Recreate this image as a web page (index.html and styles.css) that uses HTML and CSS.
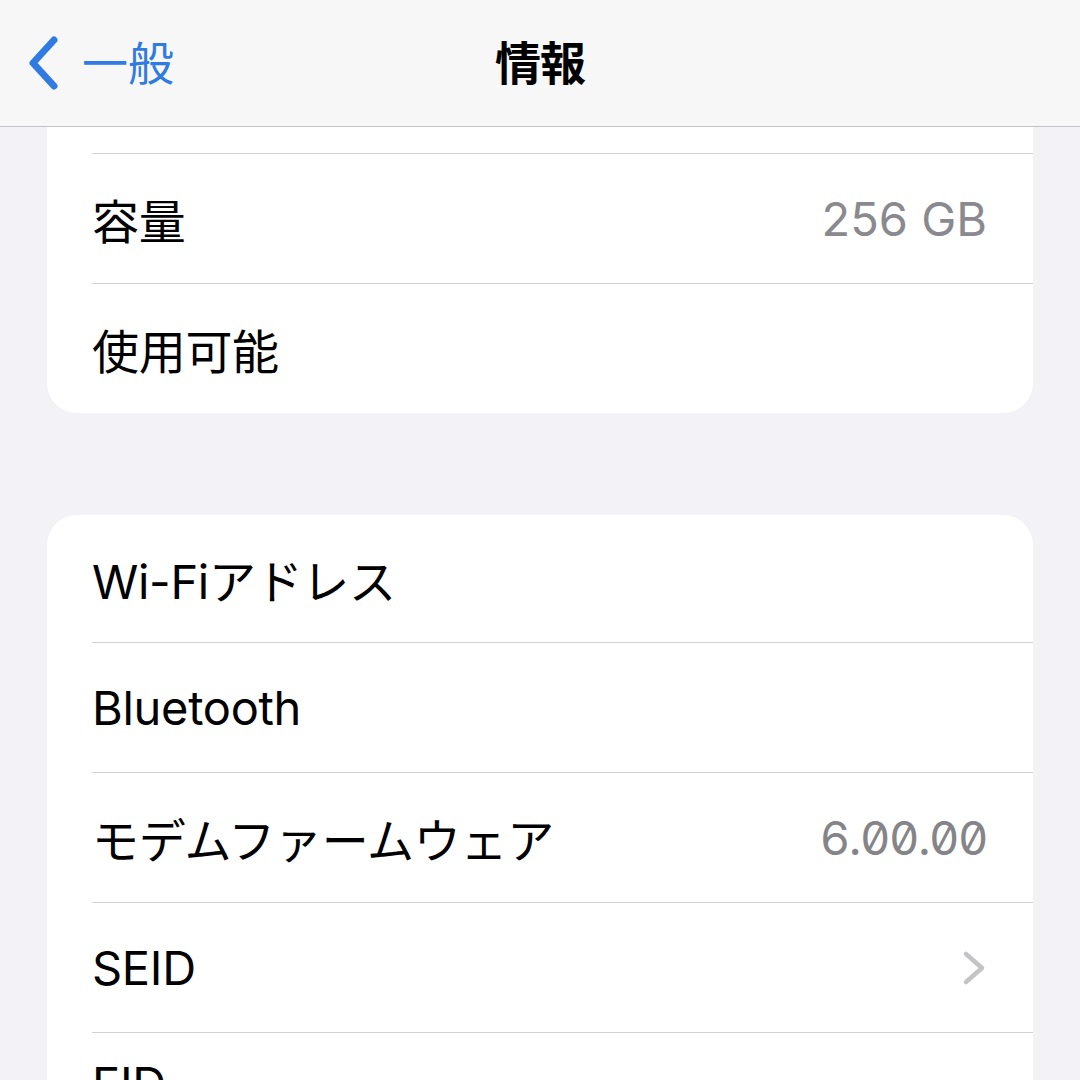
FILE: index.html
```html
<!DOCTYPE html>
<html lang="ja">

<head>
   <meta charset="UTF-8">
   <meta name="viewport" content="width=device-width, initial-scale=1.0">
   <title>情報</title>
   <link rel="stylesheet" href="styles.css">
</head>

<body>
   <div class="screen">
      <header class="navbar">
         <a class="back" href="#">
            <svg class="back-icon" width="34" height="56" viewBox="0 0 34 56">
               <path d="M28 5 L7 28 L28 51" fill="none" stroke="currentColor" stroke-width="7" stroke-linecap="round" stroke-linejoin="round" />
            </svg>
            <span>一般</span>
         </a>
         <h1 class="title">情報</h1>
         <div></div>
      </header>

      <main class="content">
         <section class="card">
            <div class="row stub">
               <div class="row-inner"></div>
            </div>
            <div class="row">
               <div class="row-inner">
                  <span class="label">容量</span>
                  <span class="value">256 GB</span>
               </div>
            </div>
            <div class="row">
               <div class="row-inner">
                  <span class="label">使用可能</span>
                  <span class="value"></span>
               </div>
            </div>
         </section>

         <section class="card">
            <div class="row first">
               <div class="row-inner">
                  <span class="label">Wi-Fiアドレス</span>
                  <span class="value"></span>
               </div>
            </div>
            <div class="row">
               <div class="row-inner">
                  <span class="label">Bluetooth</span>
                  <span class="value"></span>
               </div>
            </div>
            <div class="row">
               <div class="row-inner">
                  <span class="label">モデムファームウェア</span>
                  <span class="value mono">6.00.00</span>
               </div>
            </div>
            <div class="row">
               <div class="row-inner">
                  <span class="label">SEID</span>
                  <svg class="chevron" width="26" height="36" viewBox="0 0 26 36">
                     <path d="M5 4 L21 18 L5 32" fill="none" stroke="currentColor" stroke-width="4.5" stroke-linecap="round" stroke-linejoin="round" />
                  </svg>
               </div>
            </div>
            <div class="row tall">
               <div class="row-inner">
                  <span class="label">EID</span>
               </div>
            </div>
         </section>
      </main>
   </div>
</body>

</html>
```

FILE: styles.css
```css
body {
   margin: 0;
   padding: 0;
   background-color: #f2f2f7;
   font-family: 'Inter', 'Noto Sans CJK JP', sans-serif;
   color: #000;
}

.screen {
   width: 1080px;
   height: 1080px;
   overflow: hidden;
   display: flex;
   flex-direction: column;
}

.navbar {
   flex: none;
   height: 127px;
   box-sizing: border-box;
   padding-bottom: 6px;
   display: grid;
   grid-template-columns: 1fr auto 1fr;
   align-items: center;
   background-color: #f7f7f7;
   border-bottom: 1px solid #c4c4c4;
}

.back {
   display: flex;
   align-items: center;
   gap: 22px;
   padding-left: 26px;
   color: #2f7be3;
   text-decoration: none;
   font-size: 46px;
   font-family: 'Noto Sans CJK JP', sans-serif;
   font-weight: 400;
}

.back-icon {
   margin-top: 6px;
}

.title {
   margin: 0;
   font-size: 46px;
   font-weight: 700;
   font-family: 'Noto Sans CJK JP', sans-serif;
   letter-spacing: -1px;
}

.content {
   flex: 1;
   display: flex;
   flex-direction: column;
   gap: 102px;
   padding: 0 47px;
}

.card {
   background-color: #fff;
   border-radius: 30px;
   overflow: hidden;
}

.card:first-child {
   border-top-left-radius: 0;
   border-top-right-radius: 0;
}

.row {
   padding-left: 45px;
}

.row-inner {
   height: 129px;
   display: flex;
   justify-content: space-between;
   align-items: center;
   padding-right: 46px;
   border-bottom: 1px solid #d1d1d4;
}

.row:last-child .row-inner {
   border-bottom: none;
}

.stub .row-inner {
   height: 26px;
}

.first .row-inner {
   height: 127px;
}

.tall .row-inner {
   height: 160px;
   align-items: flex-start;
   padding-top: 22px;
   box-sizing: border-box;
}

.label {
   font-size: 47px;
   letter-spacing: -0.3px;
}

.value {
   font-size: 47px;
   color: #8a8a8e;
}

.mono {
   font-feature-settings: "zero" 1, "tnum" 1;
   color: #858589;
   letter-spacing: -1.5px;
}

.chevron {
   color: #c4c4c7;
}
```
